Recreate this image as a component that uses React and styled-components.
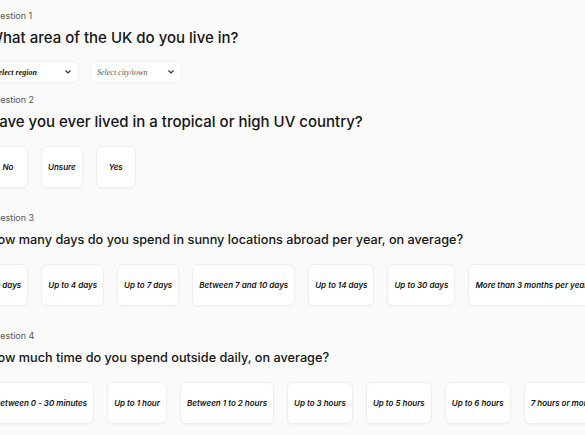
import React from "react";
import styled, { createGlobalStyle } from "styled-components";

const GlobalStyle = createGlobalStyle`
  html, body {
    margin: 0;
    padding: 0;
    background: #fafafa;
    overflow: hidden;
  }
  body {
    font-family: 'Inter', 'DejaVu Sans', sans-serif;
    color: #111;
  }
`;

const Page = styled.div`
  margin-left: -12px;
  padding-top: 10px;
  display: flex;
  flex-direction: column;
`;

const Section = styled.section`
  display: flex;
  flex-direction: column;
  margin-bottom: ${props => props.$spacing || 24}px;
`;

const Label = styled.div`
  font-size: 9px;
  line-height: 12px;
  color: #555;
`;

const Heading = styled.h2`
  margin: 6px 0 14px;
  font-size: ${props => props.$size || 15}px;
  line-height: 20px;
  font-weight: 500;
  color: #151515;
  white-space: nowrap;
`;

const Options = styled.div`
  display: flex;
  gap: 13px;
  white-space: nowrap;
`;

const Option = styled.button`
  flex: none;
  height: 42px;
  min-width: 40px;
  padding: 0 6px;
  background: #fff;
  border: 1px solid #efefef;
  border-radius: 6px;
  box-shadow: 0 1px 2px rgba(0, 0, 0, 0.03);
  font-family: 'Inter', 'DejaVu Sans', sans-serif;
  font-style: italic;
  font-weight: 600;
  font-size: 8px;
  color: #111;
`;

const SelectBox = styled.div`
  width: 90px;
  height: 20px;
  box-sizing: border-box;
  display: flex;
  align-items: center;
  justify-content: space-between;
  padding: 0 7px 0 6px;
  background: #fff;
  border-radius: 4px;
  box-shadow: 0 0 2px rgba(0, 0, 0, 0.12);
  font-family: 'Liberation Serif', serif;
  font-style: italic;
  font-size: 8px;
  font-weight: ${props => (props.$bold ? 700 : 400)};
  color: ${props => (props.$bold ? "#111" : "#555")};
`;

const Chevron = () => (
  <svg width="6" height="4" viewBox="0 0 6 4">
    <path d="M0.5 0.5 L3 3 L5.5 0.5" fill="none" stroke="#333" strokeWidth="1.2" />
  </svg>
);

const questions = [
  {
    title: "Have you ever lived in a tropical or high UV country?",
    size: 15,
    options: ["No", "Unsure", "Yes"],
  },
  {
    title: "How many days do you spend in sunny locations abroad per year, on average?",
    size: 12.7,
    options: [
      "0 days",
      "Up to 4 days",
      "Up to 7 days",
      "Between 7 and 10 days",
      "Up to 14 days",
      "Up to 30 days",
      "More than 3 months per year",
    ],
  },
  {
    title: "How much time do you spend outside daily, on average?",
    size: 12.7,
    options: [
      "Between 0 - 30 minutes",
      "Up to 1 hour",
      "Between 1 to 2 hours",
      "Up to 3 hours",
      "Up to 5 hours",
      "Up to 6 hours",
      "7 hours or more",
    ],
  },
];

const App = () => {
  return (
    <>
      <GlobalStyle />
      <Page>
        <Section $spacing={12}>
          <Label>Question 1</Label>
          <Heading $size={15}>What area of the UK do you live in?</Heading>
          <Options>
            <SelectBox $bold>
              Select region
              <Chevron />
            </SelectBox>
            <SelectBox>
              Select city/town
              <Chevron />
            </SelectBox>
          </Options>
        </Section>

        {questions.map((q, i) => (
          <Section key={q.title}>
            <Label>Question {i + 2}</Label>
            <Heading $size={q.size}>{q.title}</Heading>
            <Options>
              {q.options.map(opt => (
                <Option key={opt}>{opt}</Option>
              ))}
            </Options>
          </Section>
        ))}
      </Page>
    </>
  );
};

export default App;
